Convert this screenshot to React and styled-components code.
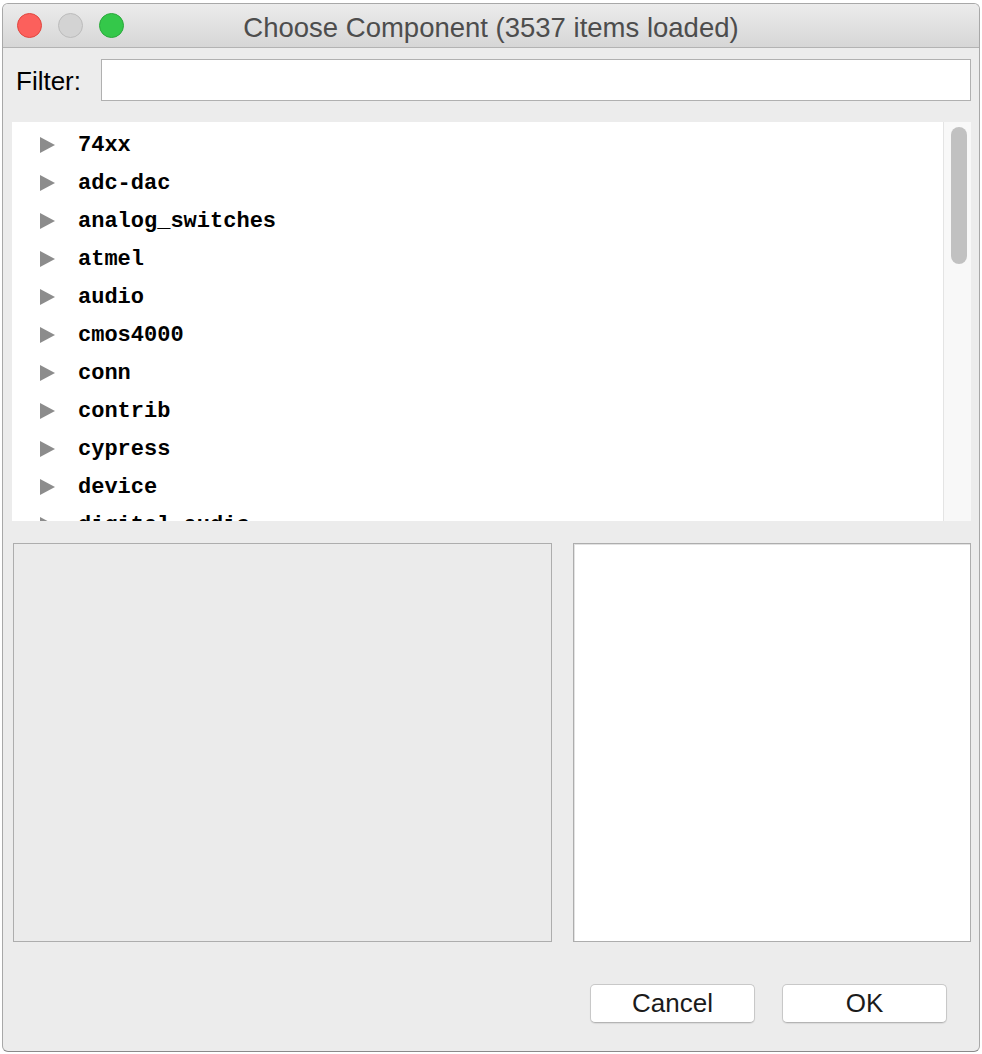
import React from "react";
import styled, { createGlobalStyle } from "styled-components";

const Global = createGlobalStyle`
  html, body { margin: 0; padding: 0; background: #ffffff; }
  * { box-sizing: border-box; }
`;

const Window = styled.div`
  margin: 3px 0 0 2px;
  width: 978px;
  height: 1049px;
  border: 1px solid #a8a8a8;
  border-bottom-color: #8a8a8a;
  border-radius: 6px;
  background: #ececec;
  display: flex;
  flex-direction: column;
  overflow: hidden;
  font-family: "Liberation Sans", Arial, sans-serif;
`;

const TitleBar = styled.div`
  position: relative;
  height: 44px;
  flex: none;
  display: flex;
  align-items: center;
  padding-left: 14px;
  gap: 16px;
  background: linear-gradient(#ececec, #d6d6d6);
  border-bottom: 1px solid #b3b3b3;
`;

const Light = styled.span`
  width: 25px;
  height: 25px;
  border-radius: 50%;
  background: ${(p) => p.$bg};
  border: 1px solid ${(p) => p.$edge};
  flex: none;
`;

const Title = styled.div`
  position: absolute;
  left: 0;
  right: 0;
  top: 0;
  bottom: 0;
  padding: 4px 0 0 0;
  display: flex;
  align-items: center;
  justify-content: center;
  font-size: 27.5px;
  color: #4d4d4d;
  pointer-events: none;
`;

const Content = styled.div`
  flex: 1;
  display: flex;
  flex-direction: column;
  padding: 11px 8px 0 8px;
`;

const FilterRow = styled.div`
  display: flex;
  align-items: center;
  height: 42px;
  gap: 20px;
  padding-left: 5px;
`;

const Label = styled.span`
  font-size: 26px;
  color: #000;
  padding-top: 3px;
`;

const Input = styled.input`
  flex: 1;
  height: 42px;
  border: 1px solid #b0b0b0;
  background: #fff;
  margin-right: 0;
  outline: none;
`;

const Tree = styled.div`
  margin-top: 21px;
  margin-left: 1px;
  height: 399px;
  background: #fff;
  display: flex;
  overflow: hidden;
`;

const List = styled.div`
  flex: 1;
  padding-top: 4px;
  overflow: hidden;
`;

const Row = styled.div`
  height: 38px;
  display: flex;
  align-items: center;
  padding-left: 28px;
  gap: 23px;
`;

const Arrow = styled.span`
  width: 0;
  height: 0;
  border-top: 8px solid transparent;
  border-bottom: 8px solid transparent;
  border-left: 15px solid #8c8c8c;
  flex: none;
`;

const RowText = styled.span`
  font-family: "Liberation Mono", "Courier New", monospace;
  font-weight: bold;
  font-size: 22px;
  color: #000;
  white-space: pre;
`;

const Track = styled.div`
  width: 28px;
  flex: none;
  background: #f8f8f8;
  border-left: 1px solid #e4e4e4;
  padding: 5px 0 0 7px;
`;

const Thumb = styled.div`
  width: 16px;
  height: 137px;
  border-radius: 8px;
  background: #c1c1c1;
`;

const Panels = styled.div`
  margin-top: 22px;
  margin-left: 2px;
  height: 399px;
  display: grid;
  grid-template-columns: 539px 1fr;
  gap: 21px;
`;

const Panel = styled.div`
  border: 1px solid #adadad;
  background: ${(p) => (p.$white ? "#ffffff" : "#ebebeb")};
  box-shadow: ${(p) => (p.$white ? "inset 1px 1px 0 #e2e2e2" : "none")};
`;

const Buttons = styled.div`
  margin-top: 42px;
  display: flex;
  justify-content: flex-end;
  gap: 27px;
  padding-right: 24px;
`;

const Button = styled.button`
  width: 165px;
  height: 39px;
  background: #fff;
  border: 1px solid #c8c8c8;
  border-bottom-color: #b4b4b4;
  border-radius: 5px;
  box-shadow: 0 1px 1px rgba(0, 0, 0, 0.08);
  font-family: "Liberation Sans", Arial, sans-serif;
  font-size: 26px;
  color: #1b1b1b;
  padding: 0;
`;

const items = [
  "74xx",
  "adc-dac",
  "analog_switches",
  "atmel",
  "audio",
  "cmos4000",
  "conn",
  "contrib",
  "cypress",
  "device",
  "digital-audio",
];

export default function App() {
  return (
    <>
      <Global />
      <Window>
        <TitleBar>
          <Light $bg="#fc605c" $edge="#e0473f" />
          <Light $bg="#d3d3d3" $edge="#bcbcbc" />
          <Light $bg="#34c84a" $edge="#2aa83b" />
          <Title>Choose Component (3537 items loaded)</Title>
        </TitleBar>
        <Content>
          <FilterRow>
            <Label>Filter:</Label>
            <Input />
          </FilterRow>
          <Tree>
            <List>
              {items.map((t) => (
                <Row key={t}>
                  <Arrow />
                  <RowText>{t}</RowText>
                </Row>
              ))}
            </List>
            <Track>
              <Thumb />
            </Track>
          </Tree>
          <Panels>
            <Panel />
            <Panel $white />
          </Panels>
          <Buttons>
            <Button>Cancel</Button>
            <Button>OK</Button>
          </Buttons>
        </Content>
      </Window>
    </>
  );
}
